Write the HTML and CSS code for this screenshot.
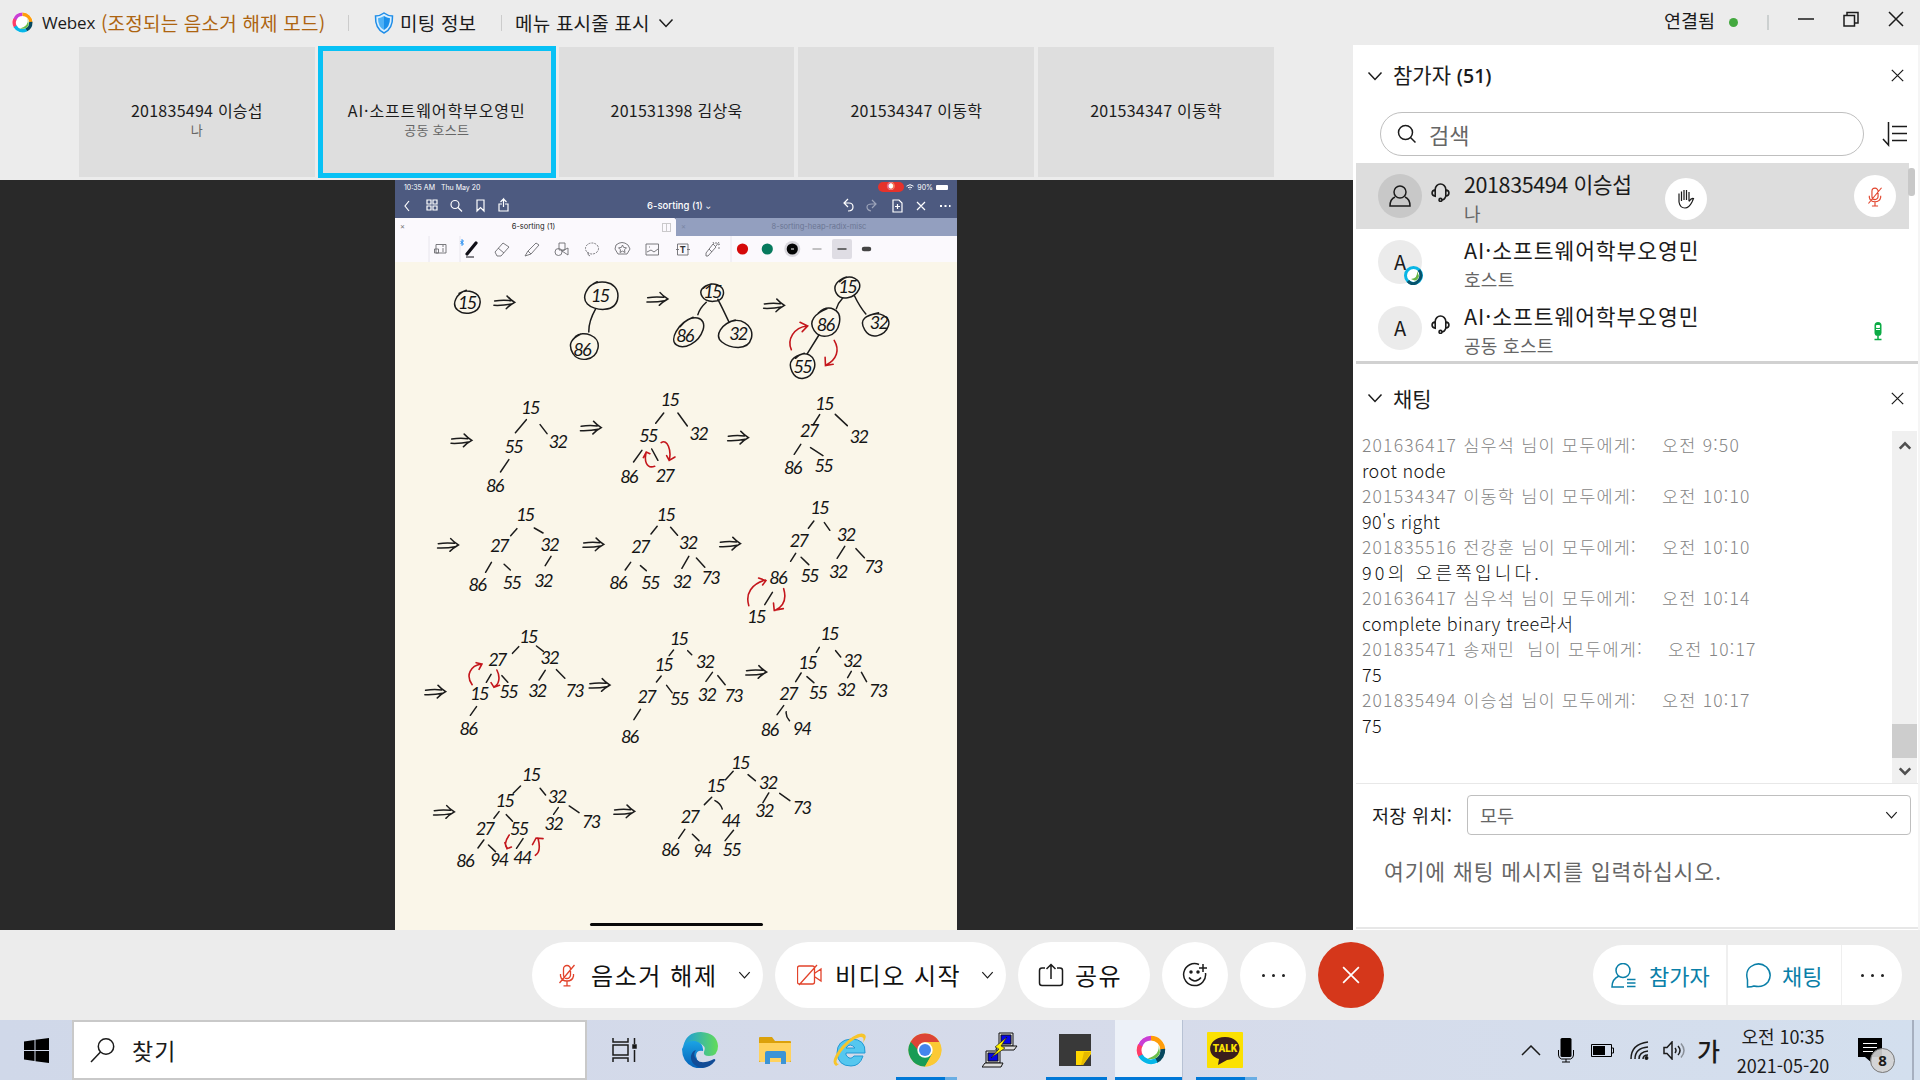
FILE: index.html
```html
<!DOCTYPE html>
<html lang="ko">
<head>
<meta charset="utf-8">
<title>Webex</title>
<link rel="stylesheet" href="styles.css">
</head>
<body>
<svg class="defs" width="0" height="0">
  <defs>
    <symbol id="webex" viewBox="0 0 30 30">
      <circle cx="15" cy="15" r="14.500" fill="#fff"/>
      <g fill="none" stroke-width="4.800">
        <path d="M15 3.200A11.800 11.800 0 0 0 4 11" stroke="#c93fd5"/>
        <path d="M4.200 10.300A11.800 11.800 0 0 0 5 21.500" stroke="#ff3d67"/>
        <path d="M15 3.200A11.800 11.800 0 0 1 26.800 15" stroke="#ff9d0a"/>
        <path d="M26.800 14A11.800 11.800 0 0 1 20 25.700" stroke="#07485f"/>
        <path d="M20.500 25.400A11.800 11.800 0 0 1 4.500 20.500" stroke="#07b6e8"/>
      </g>
      <path d="M22.500 9q2 11-11 14.500 10 2.500 12.500-6z" fill="#6abf4b"/>
    </symbol>
    <symbol id="headset" viewBox="0 0 18 18"><path d="M4 6.500V6a5 5 0 0 1 10 0v.5M4 6.500Q1 7 1 9.500T4 12.500zM14 6.500q3 .5 3 3t-3 3zM14 12.500q-1 3.500-4 3.500" /><circle cx="9" cy="16" r="1.400"/></symbol>
    <symbol id="down" viewBox="0 0 16 10"><path d="M1.500 1.500 8 8.500l6.500-7"/></symbol>
    <symbol id="cross" viewBox="0 0 16 16"><path d="m1 1 14 14M15 1 1 15"/></symbol>
    <symbol id="micoff" viewBox="0 0 18 24"><path d="M5.500 6a3.500 3.500 0 0 1 7 0v6a3.500 3.500 0 0 1-7 0zM2.500 11v2q1 5 6.500 5t6.500-5v-2M9 18v4.500M5.500 22.800h7M16.500 2 1.500 20"/></symbol>
  </defs>
</svg>

<header class="titlebar">
  <svg class="logo" width="21" height="21"><use href="#webex"/></svg>
  <span class="app">Webex</span>
  <span class="mode">(조정되는 음소거 해제 모드)</span>
  <i class="sep"></i>
  <svg class="shield" width="20" height="22" viewBox="0 0 20 22"><path d="M10 1q4 3 8.500 3Q19 17 10 21 1 17 1.500 4 6 4 10 1z" fill="#d8efff" stroke="#1e8de8" stroke-width="1.500"/><path d="M10 4q3 2 6 2.300Q16 15 10 18z" fill="#1b90ea"/><path d="M10 4Q7 6 4 6.300 4 15 10 18z" fill="#4eb1f5"/></svg>
  <span class="info">미팅 정보</span>
  <i class="sep sep2"></i>
  <span class="menu">메뉴 표시줄 표시</span>
  <svg class="ln" width="16" height="10"><use href="#down"/></svg>
  <div class="window">
    <span class="conn">연결됨</span><i class="dot"></i><i class="sep3"></i>
    <svg class="ln" width="16" height="16" viewBox="0 0 16 16"><path d="M0 8h16"/></svg>
    <svg class="ln" width="16" height="16" viewBox="0 0 16 16"><path d="M1 4.500h10.500V15H1zM4 4.500v-3h11V12h-3.500"/></svg>
    <svg class="ln" width="16" height="16"><use href="#cross"/></svg>
  </div>
</header>

<main class="main">
  <section class="left">
    <div class="strip">
      <div class="thumb"><b>201835494 이승섭</b><small>나</small></div>
      <div class="thumb active"><b class="org">AI·소프트웨어학부오영민</b><small>공동 호스트</small></div>
      <div class="thumb"><b>201531398 김상욱</b></div>
      <div class="thumb"><b>201534347 이동학</b></div>
      <div class="thumb"><b>201534347 이동학</b></div>
    </div>
    <div class="stage">
      <div class="pad">
        <div class="status"><span>10:35 AM&nbsp;&nbsp; Thu May 20</span><span class="right"><i class="rec">◉</i><svg width="8" height="6" viewBox="0 0 8 6" fill="none" stroke="#fff"><path d="M.5 2.200q3.500-3 7 0M2 3.800q2-1.600 4 0M3.500 5.200h1"/></svg><span>90%</span><i class="batt"></i></span></div>
        <div class="nav">
          <svg width="124" height="20" viewBox="0 0 124 20"><path d="m14 5-4 5 4 5M32 4h4v4h-4zM38 4h4v4h-4zM32 10h4v4h-4zM38 10h4v4h-4zM63 11.500l4 4M82 4h7v11l-3.500-3.500L82 15zM107 8h-3v7h9V8h-3M108.500 11V3l-3 3M108.500 3l3 3"/><circle cx="60" cy="8.500" r="4"/></svg>
          <span>6-sorting (1) <small>⌄</small></span>
          <svg width="124" height="20" viewBox="0 0 124 20"><path d="m21 3-4 4 4 4M17 7h5q4 0 4 4t-5 4M66 4h6l3 3v9h-9zM70.500 8v5M68 10.500h5M90 6l8 8M98 6l-8 8"/><path d="m45 4 4 4-4 4M49 8h-4q-5 0-5 3t4 4" opacity=".45"/><path d="M113 10h2M117.500 10h2M122 10h1.500" stroke-width="2"/></svg>
        </div>
        <div class="tabs"><div class="tab on"><i>×</i><span>6-sorting (1)</span><i class="split"></i></div><div class="tab"><i>×</i><span>8-sorting-heap-radix-misc</span></div></div>
        <svg class="tools" width="562" height="26" viewBox="395 236 562 26">
          <path d="M429 236v26M460 236v26M731 236v26" stroke="#e8e6ed"/>
          <g fill="none" stroke="#6c6c70" stroke-width=".9">
            <path d="M436 244.500h10v8.500h-10zM434.500 249h4v4h-4zM442 246h2M442 249h2M442 251h2"/>
            <path d="m495 252 8-9 6 4-8 9h-4zM498 248l6 5"/>
            <path d="m525 256 3-5 8-8 3 2-8 9zM528 251l3 3"/>
            <path d="M559 243h6v7h-6zM562 251l6-3v7z"/><circle cx="558.500" cy="252" r="3.500"/>
            <ellipse cx="592" cy="248.500" rx="6.500" ry="5.500" stroke-dasharray="2 1"/><path d="M588 252q-1 3 2 4"/>
            <path d="M616 245q6-5 12 0l2 4-3 5h-9l-3-5z"/><path d="m622.500 245 1.200 2.500 2.800.3-2 2 .5 2.700-2.500-1.400-2.500 1.400.5-2.700-2-2 2.800-.3z"/>
            <path d="M646 244h12.500v11H646zM647 252l4-2 3 2 4-3M649 247h1"/>
            <path d="M677.500 244H688v11h-10.500zM676 249.500h3M687 249.500h3"/>
            <path d="m706 253 7-9 3 3-8 9h-2zM709 249l3 3M716 242v2M718 245l2-1M714 244l-1-2M718 248h2M716 246l3-4"/>
          </g>
          <path d="m467 254 9-11" stroke="#101018" stroke-width="3.200" stroke-linecap="round"/><path d="M466 257h8" stroke="#101018"/>
          <path d="m460.500 241 3 3-1.500 1.500v-6l1.500 1.500-3 3" fill="none" stroke="#1687f0" stroke-width=".9"/>
          <text class="tt" x="682.700" y="252.500">T</text>
          <circle cx="742.500" cy="249" r="5.600" fill="#d50909"/><circle cx="767.300" cy="249" r="5.600" fill="#067a5d"/><circle cx="792.300" cy="249" r="8" fill="#dad8de"/><circle cx="792.300" cy="249" r="5.600" fill="#050505"/><path d="M791 249h3" stroke="#fff"/>
          <rect x="832" y="239" width="20" height="20" rx="2" fill="#dfdde4"/>
          <path d="M812.500 249h9" stroke="#888"/><path d="M837.500 249h9" stroke="#444" stroke-width="1.500"/><path d="M864 249h5" stroke="#444" stroke-width="4.500" stroke-linecap="round"/>
        </svg>
        <svg class="paper" width="562" height="668" viewBox="395 262 562 668">
          <defs><path id="imp" d="M-26-5Q-4-9 18-6M-28 8Q0 9 20 4M8-20Q16-10 29-1 14 8 6 18"/></defs>
          <g transform="translate(390 180) scale(.3635 .3333)">
            <g class="ink">
              <path d="M190 340C210 325 250 335 248 368S205 408 186 390 184 340 210 331M545 325C562 296 630 298 627 350S560 392 543 372 540 320 570 305M510 470C530 450 580 466 572 505S518 548 503 520 500 475 525 462M862 325C885 300 922 315 917 343S870 369 859 350 861 318 884 312M798 440C830 398 873 410 861 450S808 510 788 495 790 430 834 412M925 432C960 405 1004 435 994 475S935 505 913 486 912 430 950 420M1237 305C1265 276 1302 300 1290 328S1240 363 1228 340 1232 300 1256 291M1178 400C1206 370 1244 387 1236 430S1185 480 1167 452 1170 400 1203 386M1312 410C1345 390 1380 410 1371 438S1324 483 1306 450 1310 406 1344 398M1116 535C1140 505 1177 530 1167 565S1120 607 1106 575 1110 530 1140 520"/>
              <path d="M565 388Q546 425 547 456M870 367Q852 385 847 404M902 358Q915 385 932 425M1245 355Q1232 370 1228 386M1278 348Q1292 380 1309 402M1180 465 1148 521"/>
              <use href="#imp" x="314" y="368"/><use href="#imp" x="735" y="358"/><use href="#imp" x="1056" y="377"/>
            </g>
            <g class="red"><path d="M1104 509C1092 480 1110 442 1148 438M1128 427 1149 438 1134 455M1222 481C1238 510 1229 539 1200 555M1197 532 1198 557 1219 553"/></g>
            <g class="num"><text x="211" y="386">15</text><text x="577" y="366">15</text><text x="527" y="527">86</text><text x="886" y="353">15</text><text x="810" y="487">86</text><text x="957" y="479">32</text><text x="1258" y="338">15</text><text x="1197" y="454">86</text><text x="1344" y="448">32</text><text x="1134" y="578">55</text></g>
          </g>
          <g transform="translate(390 380) scale(.3635 .3333)">
            <g class="ink"><path d="M375 119 345 158M413 134l19 27M327 239l-23 37M753 99l-22 31M792 99l26 39M693 211l-23 35M720 207l17 34M1182 104l-18 31M1225 103l33 34M1130 193l-18 30M1157 203l34 24M349 446l-17 21M397 444l24 15M279 547l-16 30M314 553l17 17M443 529l-16 28M735 439l-17 23M772 442l19 24M662 547l-15 23M689 557l16 15M822 529l-19 36M843 534l23 28M1166 423l-15 22M1195 428l15 23M1116 520l-14 24M1131 532l21 22M1251 499l-21 36M1282 506l23 27M1052 637l-21 37"/>
              <use href="#imp" x="196" y="182"/><use href="#imp" x="552" y="144"/><use href="#imp" x="957" y="174"/><use href="#imp" x="159" y="496"/><use href="#imp" x="559" y="494"/><use href="#imp" x="935" y="492"/></g>
            <g class="red"><path d="M746 188C763 175 775 212 768 241M761 227l7 14 16-10M728 259C704 268 699 240 705 216M697 233l8-17 10 5M987 677C977 640 995 612 1033 600M1014 594l20 8-9 13M1083 626C1093 662 1078 681 1060 691M1055 669l2 22 25-5"/></g>
            <g class="num"><text x="385" y="102">15</text><text x="339" y="219">55</text><text x="461" y="204">32</text><text x="287" y="335">86</text><text x="769" y="77">15</text><text x="710" y="185">55</text><text x="848" y="180">32</text><text x="656" y="310">86</text><text x="755" y="306">27</text><text x="1194" y="91">15</text><text x="1152" y="172">27</text><text x="1289" y="188">32</text><text x="1107" y="281">86</text><text x="1192" y="276">55</text><text x="371" y="422">15</text><text x="300" y="517">27</text><text x="438" y="513">32</text><text x="239" y="632">86</text><text x="334" y="627">55</text><text x="421" y="622">32</text><text x="758" y="422">15</text><text x="688" y="518">27</text><text x="819" y="507">32</text><text x="626" y="627">86</text><text x="715" y="627">55</text><text x="802" y="623">32</text><text x="881" y="612">73</text><text x="1181" y="402">15</text><text x="1124" y="502">27</text><text x="1254" y="482">32</text><text x="1066" y="612">86</text><text x="1153" y="606">55</text><text x="1232" y="593">32</text><text x="1329" y="580">73</text><text x="1007" y="728">15</text></g>
          </g>
          <g transform="translate(390 620) scale(.3635 .3333)">
            <g class="ink"><path d="M354 80l-17 20M403 78l19 16M278 163l-13 24M308 167l16 20M427 151l-17 29M458 149l23 26M238 260l-17 26M780 90l-12 17M819 92l11 12M746 168l-13 18M761 196l15 22M887 157l-18 27M902 167l20 27M689 268l-18 31M1181 82l-8 15M1226 92l14 19M1131 159l-15 26M1147 170l19 18M1269 154l-10 19M1297 157l14 28M1083 257l-18 27M1090 275q-2 14 9 27M359 498l-20 22M413 505l15 20M300 575l-14 20M320 584l17 20M463 563l-13 20M493 558l27 20M258 660l-16 24M271 675l19 20M366 656l-18 29M944 454l-21 25M985 464l20 18M885 532l-20 22M894 542q15 8 20 25M1042 519l-16 29M1072 520l28 22M811 628l-17 27M832 643l18 19M945 631l-23 31"/>
              <use href="#imp" x="124" y="216"/><use href="#imp" x="576" y="196"/><use href="#imp" x="1007" y="157"/><use href="#imp" x="148" y="577"/><use href="#imp" x="644" y="575"/></g>
            <g class="red"><path d="M226 194C207 165 222 137 251 132M237 128l16 4-8 16M294 150C305 173 299 196 286 200M278 188l8 14 15-6M328 645C316 664 315 678 322 683M316 668l6 18 12-5M400 706C415 697 412 675 407 654M392 674l10-20 19 2"/></g>
            <g class="num"><text x="380" y="69">15</text><text x="294" y="137">27</text><text x="438" y="131">32</text><text x="245" y="240">15</text><text x="325" y="234">55</text><text x="404" y="232">32</text><text x="507" y="232">73</text><text x="214" y="345">86</text><text x="794" y="74">15</text><text x="752" y="154">15</text><text x="866" y="143">32</text><text x="705" y="248">27</text><text x="795" y="255">55</text><text x="871" y="242">32</text><text x="944" y="246">73</text><text x="658" y="369">86</text><text x="1208" y="61">15</text><text x="1148" y="146">15</text><text x="1271" y="140">32</text><text x="1095" y="241">27</text><text x="1176" y="237">55</text><text x="1253" y="228">32</text><text x="1342" y="230">73</text><text x="1043" y="348">86</text><text x="1132" y="346">94</text><text x="387" y="482">15</text><text x="315" y="560">15</text><text x="459" y="550">32</text><text x="260" y="645">27</text><text x="354" y="644">55</text><text x="449" y="631">32</text><text x="552" y="625">73</text><text x="205" y="742">86</text><text x="299" y="739">94</text><text x="363" y="732">44</text><text x="963" y="446">15</text><text x="895" y="516">15</text><text x="1039" y="507">32</text><text x="824" y="608">27</text><text x="937" y="621">44</text><text x="1029" y="591">32</text><text x="1132" y="582">73</text><text x="769" y="708">86</text><text x="858" y="710">94</text><text x="939" y="707">55</text></g>
          </g>
          <rect x="590" y="923" width="173" height="3" rx="1.500" fill="#080808"/>
        </svg>
      </div>
    </div>
  </section>

  <aside class="panel">
    <div class="phead"><svg class="ln" width="16" height="10"><use href="#down"/></svg><h2>참가자 <b>(51)</b></h2><svg class="ln close" width="13" height="13"><use href="#cross"/></svg></div>
    <div class="searchrow">
      <div class="search"><svg class="ln" width="20" height="20" viewBox="0 0 20 20"><circle cx="8.500" cy="8.500" r="7"/><path d="m13.500 13.500 5 5"/></svg>검색</div>
      <svg class="ln" width="26" height="26" viewBox="0 0 26 26"><path d="M6.500 1v23L1 18M10 5.500h15M10 12.500h15M10 19.500h15"/></svg>
    </div>
    <div class="people">
      <div class="row me">
        <span class="avatar"><svg class="ln" width="24" height="24" viewBox="0 0 24 24"><circle cx="12" cy="8" r="6"/><path d="M7 13q-5 2-5 9h20q0-7-5-9"/></svg></span>
        <svg class="ln hs" width="19" height="19"><use href="#headset"/></svg>
        <p><b>201835494 이승섭</b><small>나</small></p>
        <span class="round hand"><svg class="ln" width="18" height="20" viewBox="0 0 18 20"><path d="M2 4.500V13q1 6 6 6 4 0 7-6l1.500-3.500q-2-1-4.500 3M4.500 12V2.500M7 11V1M9.500 11V1M12 12V3"/></svg></span>
        <span class="round mic"><svg class="ln red-ico" width="16" height="21"><use href="#micoff"/></svg></span>
      </div>
      <div class="row"><span class="avatar">A<svg class="badge" width="19" height="19" viewBox="0 0 19 19"><circle cx="9.500" cy="9.500" r="8" fill="#fff" stroke="#08b5e5" stroke-width="3"/><path d="M15 4q5 7-3 13-5 2-8-2" fill="none" stroke="#07536c" stroke-width="3"/><path d="M13 5q1 7-6 8 6 4 8-3z" fill="#67b545"/></svg></span><span class="hs"></span><p><b>AI·소프트웨어학부오영민</b><small>호스트</small></p></div>
      <div class="row"><span class="avatar">A</span><svg class="ln hs" width="19" height="19"><use href="#headset"/></svg><p><b>AI·소프트웨어학부오영민</b><small>공동 호스트</small></p>
        <svg class="green" width="10" height="20" viewBox="0 0 10 20"><rect x="1.500" y="1" width="7" height="14" rx="3.500" fill="#0bab45"/><path d="M3.500 4.500h3v2h-3zM3 8.500h4" fill="#fff" stroke="#fff"/><path d="M5 15v3M1.500 18.500h7" stroke="#0bab45" stroke-width="1.500"/></svg></div>
      <i class="pscroll"></i>
    </div>
    <div class="phead chead"><svg class="ln" width="16" height="10"><use href="#down"/></svg><h2>채팅</h2><svg class="ln close" width="13" height="13"><use href="#cross"/></svg></div>
    <div class="chat">
      <div class="log">
        <div class="meta"><span>201636417 심우석 님이 모두에게:</span><time>오전 9:50</time></div><div class="msg">root node</div>
        <div class="meta"><span>201534347 이동학 님이 모두에게:</span><time>오전 10:10</time></div><div class="msg">90's right</div>
        <div class="meta"><span>201835516 전강훈 님이 모두에게:</span><time>오전 10:10</time></div><div class="msg ko">90의 오른쪽입니다.</div>
        <div class="meta"><span>201636417 심우석 님이 모두에게:</span><time>오전 10:14</time></div><div class="msg">complete binary tree라서</div>
        <div class="meta wide"><span>201835471 송재민&nbsp; 님이 모두에게:</span><time>오전 10:17</time></div><div class="msg">75</div>
        <div class="meta"><span>201835494 이승섭 님이 모두에게:</span><time>오전 10:17</time></div><div class="msg">75</div>
      </div>
      <div class="bar"><svg width="14" height="10" viewBox="0 0 16 10"><path d="m2 8 6-6 6 6"/></svg><i></i><svg width="14" height="10" viewBox="0 0 16 10"><path d="m2 2 6 6 6-6"/></svg></div>
    </div>
    <div class="to"><label>저장 위치:</label><div class="select">모두<svg class="ln" width="13" height="8"><use href="#down"/></svg></div></div>
    <div class="compose">여기에 채팅 메시지를 입력하십시오.</div>
  </aside>
</main>

<footer class="controls">
  <div class="pill p1"><svg class="ln red-ico" width="18" height="24"><use href="#micoff"/></svg><span>음소거 해제</span><svg class="ln" width="13" height="8"><use href="#down"/></svg></div>
  <div class="pill p2"><svg class="ln red-ico" width="26" height="22" viewBox="0 0 26 22"><path d="M2.500 2h13q2 0 2 2v14q0 2-2 2h-13q-2 0-2-2V4q0-2 2-2zM18 9l6-4v12l-6-4M20 1 2 21"/></svg><span>비디오 시작</span><svg class="ln" width="13" height="8"><use href="#down"/></svg></div>
  <div class="pill p3"><svg class="ln" width="26" height="24" viewBox="0 0 26 24"><path d="M7 5H4Q1.500 5 1.500 7.500V20q0 2.500 2.500 2.500h18q2.500 0 2.500-2.500V7.500Q24.500 5 22 5h-3M13 16V2M8.500 6 13 1.500 17.500 6"/></svg><span>공유</span></div>
  <div class="pill circ"><svg class="ln" width="26" height="26" viewBox="0 0 26 26"><path d="M17 2.500A11 11 0 1 0 23.500 11M7 15.500q6 7 12 0M21 2v8M17 6h8"/><circle cx="9" cy="10" r="1" fill="#111"/><circle cx="16" cy="10" r="1" fill="#111"/></svg></div>
  <div class="pill circ dots"><i></i><i></i><i></i></div>
  <div class="pill circ end"><svg class="ln" width="18" height="18"><use href="#cross"/></svg></div>
  <div class="pill side">
    <div class="s1"><svg class="ln" width="25" height="25" viewBox="0 0 25 25"><circle cx="12" cy="7.500" r="7"/><path d="M8 13q-7 3-7 11h12M16 16.500h8.500M16 20h8.500M16 23.500h8.500"/></svg>참가자</div>
    <div class="s2"><svg class="ln" width="25" height="25" viewBox="0 0 25 25"><path d="M1.500 24V17Q-1 8 5 3.500 13-2 20.500 4 27 11 22 19q-5 6-14 4-2 1-6.500 1z"/></svg>채팅</div>
    <div class="s3 dots"><i></i><i></i><i></i></div>
  </div>
</footer>

<nav class="taskbar">
  <div class="start"><svg width="25" height="25" viewBox="0 0 25 25"><path d="M0 3.500 10.500 2v10H0zM11.500 1.800 25 0v12H11.500zM0 13h10.500v10L0 21.500zM11.500 13H25v12l-13.500-1.800z"/></svg></div>
  <div class="find"><svg class="ln" width="25" height="25" viewBox="0 0 25 25"><circle cx="16" cy="8.500" r="7.700"/><path d="M10.500 14 1 24"/></svg>찾기</div>
  <div class="slot"><svg class="ln" width="26" height="24" viewBox="0 0 26 24"><path d="M1 0v4h15V0M1 24v-4h15v4M1 7h15v10H1zM22.500 0v6M22.500 12v12"/><path d="M21 7h3v3h-3z" fill="#111"/></svg></div>
  <div class="slot"><svg width="36" height="36" viewBox="0 0 36 36"><defs><linearGradient id="eg"><stop stop-color="#1a9ae2"/><stop offset="1" stop-color="#63dc57"/></linearGradient><linearGradient id="eb" x2="0" y2="1"><stop stop-color="#1ba3e5"/><stop offset="1" stop-color="#0561b8"/></linearGradient></defs><path d="M1 15Q4 0 19 0q16 1 17 14 0 10-9 10-6 0-5-4 3-6-5-9Q8 9 1 15z" fill="url(#eg)"/><path d="M0 17Q4 8 13 9q9 2 8 10-7-1-7 5 1 8 12 10-7 4-15 1Q0 30 0 17z" fill="url(#eb)"/><path d="M14 18q-4 5 1 10t17-1q2 0 1 2-7 9-17 6Q8 31 9 24q1-5 5-6z" fill="#124c96"/></svg></div>
  <div class="slot"><svg width="32" height="28" viewBox="0 0 32 28"><path d="M0 2Q0 1 1 1h12l3 4h15q1 0 1 1v20H0z" fill="#dba10b"/><path d="M0 7h32v17q0 2-2 2H2q-2 0-2-2z" fill="#ffd25e"/><path d="M6 28V17q0-2 2-2h17q2 0 2 2v11h-5v-6H11v6z" fill="#3c94d5"/></svg></div>
  <div class="slot"><svg width="36" height="36" viewBox="0 0 36 36"><path d="M31 24H22q-4 5-8-1v-2h19Q34 7 19 7 5 8 5 21q1 13 14 13 9 0 12-10zM14 16q4-6 9 0z" fill="#55c7ef" stroke="#2299d4" fill-rule="evenodd"/><path d="M4 34Q-3 30 10 14 25-1 32 2q4 2-1 9 2-7-3-6Q19 7 9 20 1 32 7 32z" fill="#f7c52b"/></svg></div>
  <div class="slot open more"><svg width="34" height="34" viewBox="0 0 34 34"><circle cx="17" cy="17" r="16.500" fill="#fbc934"/><path d="M17 17 2.700 8.700A16.500 16.500 0 0 0 17 33.500l7-12z" fill="#189c56"/><path d="M2.700 8.700A16.500 16.500 0 0 1 31.300 9H17q-6 1-7 8z" fill="#dc4436"/><path d="M24 21l-7 12.500A16.500 16.500 0 0 0 31.300 9H17" fill="#fbc934"/><circle cx="17" cy="17" r="7.700" fill="#fff"/><circle cx="17" cy="17" r="6" fill="#4485ed"/></svg></div>
  <div class="slot"><svg width="36" height="36" viewBox="0 0 36 36" stroke="#111"><path d="M17 1h14v13H17z" fill="#ddd"/><path d="M19 3h10v9H19z" fill="#0505e8"/><path d="M14 17l2-3h19l-3 4H14zM4 19h14v12H4z" fill="#ddd"/><path d="M6 21h10v8H6z" fill="#0505e8"/><path d="M0 35l3-4h18l-2 4z" fill="#ddd"/><path d="m25 5-12 10 4 2-8 9 14-10-4-2z" fill="#fff200" stroke-width=".6"/></svg></div>
  <div class="slot open full"><svg width="32" height="32" viewBox="0 0 32 32"><path d="M0 0h32v32H0z" fill="#393939"/><path d="M17 17h15v3L24 31h-7z" fill="#ffd600"/><path d="M32 18H25L22 31h2z" fill="#e5b800"/></svg></div>
  <div class="slot open current more"><svg width="30" height="30"><use href="#webex"/></svg></div>
  <div class="slot open more"><svg width="36" height="36" viewBox="0 0 36 36"><rect width="36" height="36" rx="1" fill="#fbe101"/><path d="M18 5c19 0 19 22 2 23l-9 5 1-6C-2 23 1 5 18 5z" fill="#3a1d1d"/><text class="talk" x="18" y="20">TALK</text></svg></div>
  <div class="tray">
    <svg class="ln t1" width="20" height="11" viewBox="0 0 20 11"><path d="m1 10 9-9 9 9"/></svg>
    <svg class="t2" width="16" height="25" viewBox="0 0 16 25"><rect x="2.500" width="11" height="19" rx="1.500"/><path d="M.5 12v5q0 3 3 4h9q3-1 3-4v-5M8 21v3M4 24h8" fill="none" stroke="#000"/></svg>
    <svg class="t3" width="23" height="13" viewBox="0 0 23 13"><path d="M.5.5h20v12H.5zM20.500 4h2v5h-2" fill="none" stroke="#000"/><path d="M2 2h12v9H2z"/></svg>
    <svg class="ln t4" width="19" height="19" viewBox="0 0 19 19"><path d="M1 18Q1 3 18 1M5 18Q5 7 18 6M9 18q0-7 9-8M13 18q0-4 5-4"/><circle cx="16.500" cy="17" r="1.200" fill="#000"/></svg>
    <svg class="ln t5" width="23" height="19" viewBox="0 0 23 19"><path d="M1 6.500h3L9 1v17l-5-5.500H1zM12 7q2 2.500 0 5M15 5q4 4.500 0 9"/><path d="M18 2.500q6 7 0 14" opacity=".4"/></svg>
    <span class="ime">가</span>
    <div class="clock"><span>오전 10:35</span><span>2021-05-20</span></div>
    <div class="note"><svg width="25" height="25" viewBox="0 0 25 25"><path d="M0 0h24v19H14v6l-7-6H0z"/><path d="M5 5.500h14M5 9.500h14M5 13.500h10" stroke="#fff"/></svg><b>8</b></div>
  </div>
</nav>
</body>
</html>
```

FILE: styles.css
```css
* { box-sizing: border-box; }
body { margin: 0; width: 1920px; height: 1080px; overflow: hidden; display: flex; flex-direction: column; background: #ececec; color: #1b1b1b; font-family: "Noto Sans CJK KR", sans-serif; line-height: 1; white-space: nowrap; }
svg { flex: none; display: block; }
i { font-style: normal; }
b, h2 { font-weight: 400; }
.defs { position: absolute; }
.ln { fill: none; stroke: #1b1b1b; stroke-width: 1.5; }
.red-ico { stroke: #e2432b; stroke-width: 1.3; }

.titlebar { height: 45px; display: flex; align-items: center; padding-left: 12px; font-size: 19px; }
.app { margin-left: 9px; width: 59px; font-family: "Open Sans", sans-serif; font-size: 17px; letter-spacing: -.2px; }
.mode { color: #ad6410; width: 247px; letter-spacing: .2px; }
.sep { width: 1px; height: 16px; background: #ccc; }
.shield { margin-left: 25px; }
.info { margin-left: 6px; width: 101px; letter-spacing: .2px; }
.sep2 { margin-right: 13px; }
.menu { width: 143px; letter-spacing: .2px; }
.window { margin-left: auto; display: flex; align-items: center; padding-right: 16px; gap: 29px; height: 38px; align-self: flex-start; }
.conn { font-size: 18.500px; margin-right: -15px; padding-top: 3px; }
.dot { width: 9px; height: 9px; border-radius: 50%; background: #43a83f; margin: 6px 0 0; }
.sep3 { width: 2px; height: 15px; background: #ccd0d0; margin: 6px 0 0; }

.main { height: 885px; display: flex; }
.left { width: 1353px; display: flex; flex-direction: column; }
.strip { height: 135px; display: flex; gap: 4px; padding: 2px 0 3px 79px; align-items: stretch; }
.thumb { width: 235.800px; background: #dedede; display: flex; flex-direction: column; align-items: center; padding-top: 55px; font-size: 16px; letter-spacing: .25px; }
.thumb small { font-size: 13px; color: #666; margin-top: 5px; }
.active { outline: 5px solid #08c1f5; outline-offset: -4px; }
.org { letter-spacing: .9px; }
.stage { flex: 1; background: #292929; padding-left: 395px; }
.pad { width: 562px; height: 750px; background: #4d5a80; display: flex; flex-direction: column; font-family: Inter, sans-serif; }
.status { height: 15px; color: #fff; font-size: 7px; padding: 0 9px 1px; display: flex; align-items: center; justify-content: space-between; }
.right { display: flex; align-items: center; gap: 3px; }
.rec { width: 26px; height: 10px; border-radius: 5px; background: #e6322b; text-align: center; font-size: 8px; line-height: 9px; margin-right: -1px; }
.batt { width: 12px; height: 5px; border-radius: 1px; background: #fff; }
.nav { height: 23px; display: flex; align-items: center; justify-content: space-between; color: #fff; font-size: 9.500px; font-weight: 500; padding: 0 6px 2px 0; }
.nav > span { padding-left: 12px; }
.nav svg { fill: none; stroke: #fff; stroke-width: 1.200; }
.nav small { font-size: 7px; }
.tabs { height: 18px; display: flex; font-size: 7.500px; }
.tab { width: 281px; height: 18px; background: #939fbf; color: #6b7694; display: flex; align-items: center; padding: 0 5px; }
.tab span { flex: 1; text-align: center; }
.on { background: #fbf9fd; color: #222; border-radius: 0 2px 0 0; }
.tab i { opacity: .6; }
.split { width: 9px; height: 9px; border: 1px solid #aaa; background: linear-gradient(90deg, transparent 3px, #aaa 3px, #aaa 4px, transparent 4px); }
.tools { background: #fbf9fd; }
.tt { font: 700 9px Inter, sans-serif; text-anchor: middle; fill: #333; }
.paper { background: #faf6e9; }
.ink path, .red path { fill: none; stroke: #1c1c1c; stroke-width: 1.500; stroke-linecap: round; vector-effect: non-scaling-stroke; }
.ink use, #imp { fill: none; stroke: #1c1c1c; stroke-width: 4.500; stroke-linecap: round; }
.red path { stroke: #c4161c; stroke-width: 1.600; }
.num { font: italic 400 50px Lato, sans-serif; letter-spacing: -5px; text-anchor: middle; fill: #151515; }

.panel { width: 567px; background: #fff; display: flex; flex-direction: column; padding-left: 3px; border-right: 2px solid #f5f5f5; }
.phead { height: 61px; display: flex; align-items: center; padding: 0 14px 0 11px; }
.phead h2 { margin: 0 auto 0 10px; font-size: 21px; }
.phead h2 b { font: 600 19.500px "Open Sans", sans-serif; }
.searchrow { height: 57px; padding: 6px 10px 7px 24px; display: flex; align-items: center; justify-content: space-between; }
.search { width: 484px; height: 44px; border: 1px solid #bfbfbf; border-radius: 22px; display: flex; align-items: center; padding-left: 16px; gap: 12px; font-size: 22px; color: #666; }
.people { height: 201px; border-bottom: 3px solid #d1d1d1; position: relative; }
.row { width: 553px; height: 66px; display: flex; align-items: center; padding-left: 22px; }
.me { background: #ddd; }
.me .avatar { background: #c8c8c8; }
.avatar { width: 44px; height: 44px; border-radius: 50%; background: #ebebeb; display: flex; align-items: center; justify-content: center; font-size: 20px; position: relative; flex: none; }
.badge { position: absolute; right: -1px; bottom: -1px; }
.hs { width: 19px; margin: 0 14px 7px 9px; }
.row p { margin: 0; padding-top: 3px; display: flex; flex-direction: column; gap: 9px; width: 200px; }
.row b { font-size: 21.500px; letter-spacing: .95px; }
.me b { letter-spacing: -.4px; }
.row small { font-size: 18px; color: #666; letter-spacing: .3px; }
.round { width: 42px; height: 42px; border-radius: 50%; background: #fff; display: flex; align-items: center; justify-content: center; }
.hand { margin: 5px 0 0 1px; }
.hand .ln { stroke-width: 1.200; }
.mic { margin-left: 147px; }
.green { margin-left: 209px; margin-top: 5px; }
.pscroll { position: absolute; right: 3px; top: 5px; width: 7px; height: 28px; border-radius: 3px; background: #c8c8c8; }
.chead { height: 67px; padding-top: 1px; }
.chat { height: 353px; display: flex; justify-content: space-between; border-bottom: 1px solid #e8e8e8; }
.log { padding: 1px 0 0 6px; font-weight: 300; }
.log > div { height: 25.500px; display: flex; align-items: center; }
.meta { font-size: 17.500px; color: #858585; letter-spacing: 1.200px; }
.meta span { width: 300px; }
.wide span { width: 306px; }
.msg { font-size: 18px; letter-spacing: .35px; color: #111; }
.log .ko { letter-spacing: 3.200px; }
.bar { width: 25px; margin-right: 1px; background: #f0f0f0; display: flex; flex-direction: column; align-items: center; padding: 10px 0 7px; }
.bar svg { fill: none; stroke: #505050; stroke-width: 3; }
.bar i { width: 25px; height: 34px; background: #cdcdcd; margin: auto 0 8px; }
.to { height: 64px; display: flex; align-items: center; padding: 0 0 2px 16px; font-size: 18.500px; }
.to label { width: 95px; letter-spacing: .3px; }
.select { width: 444px; height: 40px; border: 1px solid #bfbfbf; border-radius: 4px; display: flex; align-items: center; justify-content: space-between; padding: 0 12px; color: #666; }
.compose { height: 81px; padding: 12px 0 0 28px; font-size: 21.500px; letter-spacing: .9px; color: #666; border-bottom: 2px solid #e7e7e7; }

.controls { height: 90px; display: flex; align-items: center; padding: 0 18px 0 532px; font-size: 24px; color: #111; }
.pill { height: 66px; border-radius: 33px; background: #fff; display: flex; align-items: center; margin-right: 12px; }
.p1 { width: 231px; padding-left: 26px; }
.p1 span { margin: 0 auto 0 15px; letter-spacing: 1.600px; }
.p1 .ln:last-child, .p2 .ln:last-child { margin-right: 12px; }
.p2 { width: 231px; padding-left: 22px; }
.p2 span { margin: 0 auto 0 12px; letter-spacing: 1.500px; }
.p3 { width: 132px; padding-left: 20px; gap: 11px; letter-spacing: 1.500px; }
.circ { width: 66px; justify-content: center; }
.dots { gap: 7px; justify-content: center; }
.dots i { width: 3px; height: 3px; border-radius: 50%; background: #222; }
.end { background: #d5371b; margin-right: 0; }
.end .ln { stroke: #fff; }
.side { margin: 0 0 0 auto; width: 309px; height: 60px; font-size: 22px; color: #0a7fa8; }
.side .ln { stroke: #0a7fa8; }
.side div { height: 60px; display: flex; align-items: center; gap: 13px; }
.side .s1 { width: 135px; padding-left: 18px; border-right: 2px solid #efefef; }
.side .s2 { width: 114px; padding-left: 18px; border-right: 1px solid #efefef; gap: 11px; }
.side .s3 { width: 60px; gap: 7px; }

.taskbar { height: 60px; background: linear-gradient(90deg, #d0d8e9, #d6dbea 60%, #d3dfee); display: flex; align-items: stretch; }
.start { width: 72px; display: flex; align-items: center; justify-content: center; }
.find { width: 515px; background: #fff; border: 2px solid #c9c9c9; display: flex; align-items: center; padding-left: 16px; gap: 17px; font-size: 23px; letter-spacing: 1px; }
.slot { width: 75px; display: flex; align-items: center; justify-content: center; background-repeat: no-repeat; padding-left: 1px; }
.open { background-image: linear-gradient(90deg, #0078d7 49px, #6aaee4 49px); background-size: 61px 3px; background-position: 9px 57px; }
.full { background-image: linear-gradient(#0078d7, #0078d7); }
.current { background-color: #edf1f8; background-size: 74px 3px; background-image: linear-gradient(90deg, #0078d7 68px, #6aaee4 68px); background-position: 0 57px; width: 68px; margin: 0 4px 0 3px; padding-left: 5px; border-right: 1px solid #b8c2d4; }
.talk { font: 900 10px Roboto, sans-serif; text-anchor: middle; fill: #fbe101; }
.tray { margin-left: auto; margin-right: 6px; padding-right: 29px; border-right: 2px solid #a6afbf; display: flex; align-items: center; }
.t2 { margin-left: 17px; }
.t3 { margin-left: 17px; }
.t4 { margin-left: 16px; }
.t5 { margin-left: 14px; }
.ime { font-size: 25px; margin-left: 11px; font-weight: 500; }
.clock { width: 94px; margin-left: 16px; display: flex; flex-direction: column; align-items: center; gap: 11px; font-size: 18px; }
.note { margin-left: 28px; position: relative; }
.note b { position: absolute; left: 12px; top: 10px; width: 25px; height: 25px; border: 1px solid #777; border-radius: 50%; background: #d3d3d3e8; text-align: center; font: 700 15px/23px "Open Sans", sans-serif; }
```
